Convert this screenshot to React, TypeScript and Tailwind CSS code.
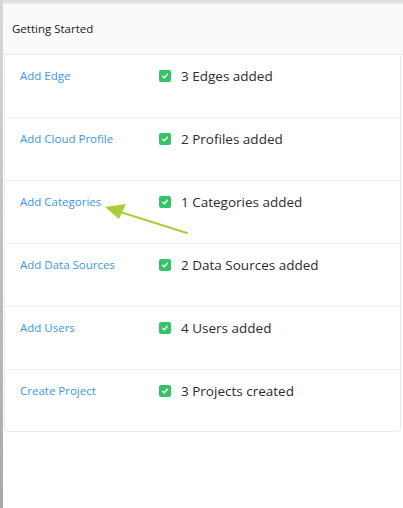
const steps = [
  { link: 'Add Edge', status: '3 Edges added' },
  { link: 'Add Cloud Profile', status: '2 Profiles added' },
  { link: 'Add Categories', status: '1 Categories added' },
  { link: 'Add Data Sources', status: '2 Data Sources added' },
  { link: 'Add Users', status: '4 Users added' },
  { link: 'Create Project', status: '3 Projects created' },
];

function CheckBox() {
  return (
    <span className="flex h-[12px] w-[12px] shrink-0 items-center justify-center rounded-[2px] bg-[#34c467]">
      <svg width="8" height="8" viewBox="0 0 8 8">
        <path d="M1.6 4.2 L3.3 5.8 L6.4 2.2" fill="none" stroke="#fff" strokeWidth="1.4" strokeLinecap="round" strokeLinejoin="round" />
      </svg>
    </span>
  );
}

export default function App() {
  return (
    <div className="flex h-[508px] w-[403px] bg-white font-['Open_Sans',sans-serif]">
      {/* left gutter */}
      <div className="w-[3px] shrink-0 bg-gradient-to-b from-[#d8d8d8] to-[#a9a9a9]" />
      <div className="flex flex-1 flex-col">
        <div className="h-[4px] bg-gradient-to-b from-[#dcdcdc] to-[#ececec]" />
        <div className="flex h-[51px] items-center border-b border-[#e5ebf1] bg-[#fafafa] pl-[9px] text-[11.5px] text-[#222]">
          Getting Started
        </div>
        <div className="relative ml-[1px] mr-[2px] overflow-hidden rounded-b-[4px] border border-t-0 border-[#e6ebf1] bg-white">
          {steps.map((s, i) => (
            <div
              key={s.link}
              className={`grid grid-cols-[139px_1fr] items-start pl-[15px] pt-[13px] ${i < steps.length - 1 ? 'h-[63px] border-b border-[#eef1f4]' : 'h-[61px]'}`}
            >
              <a className="text-[11.5px] leading-[16px] text-[#3b97e3]">{s.link}</a>
              <div className="flex items-center gap-[10px]">
                <CheckBox />
                <span className="text-[13.5px] leading-[16px] text-[#2c2c2c]">{s.status}</span>
              </div>
            </div>
          ))}
          <svg className="pointer-events-none absolute left-0 top-0" width="400" height="400">
            <line x1="182" y1="178" x2="112" y2="156" stroke="#a7cf3c" strokeWidth="2" strokeLinecap="round" />
            <polygon points="100,152 121,149 114,164" fill="#a7cf3c" />
          </svg>
        </div>
      </div>
    </div>
  );
}
